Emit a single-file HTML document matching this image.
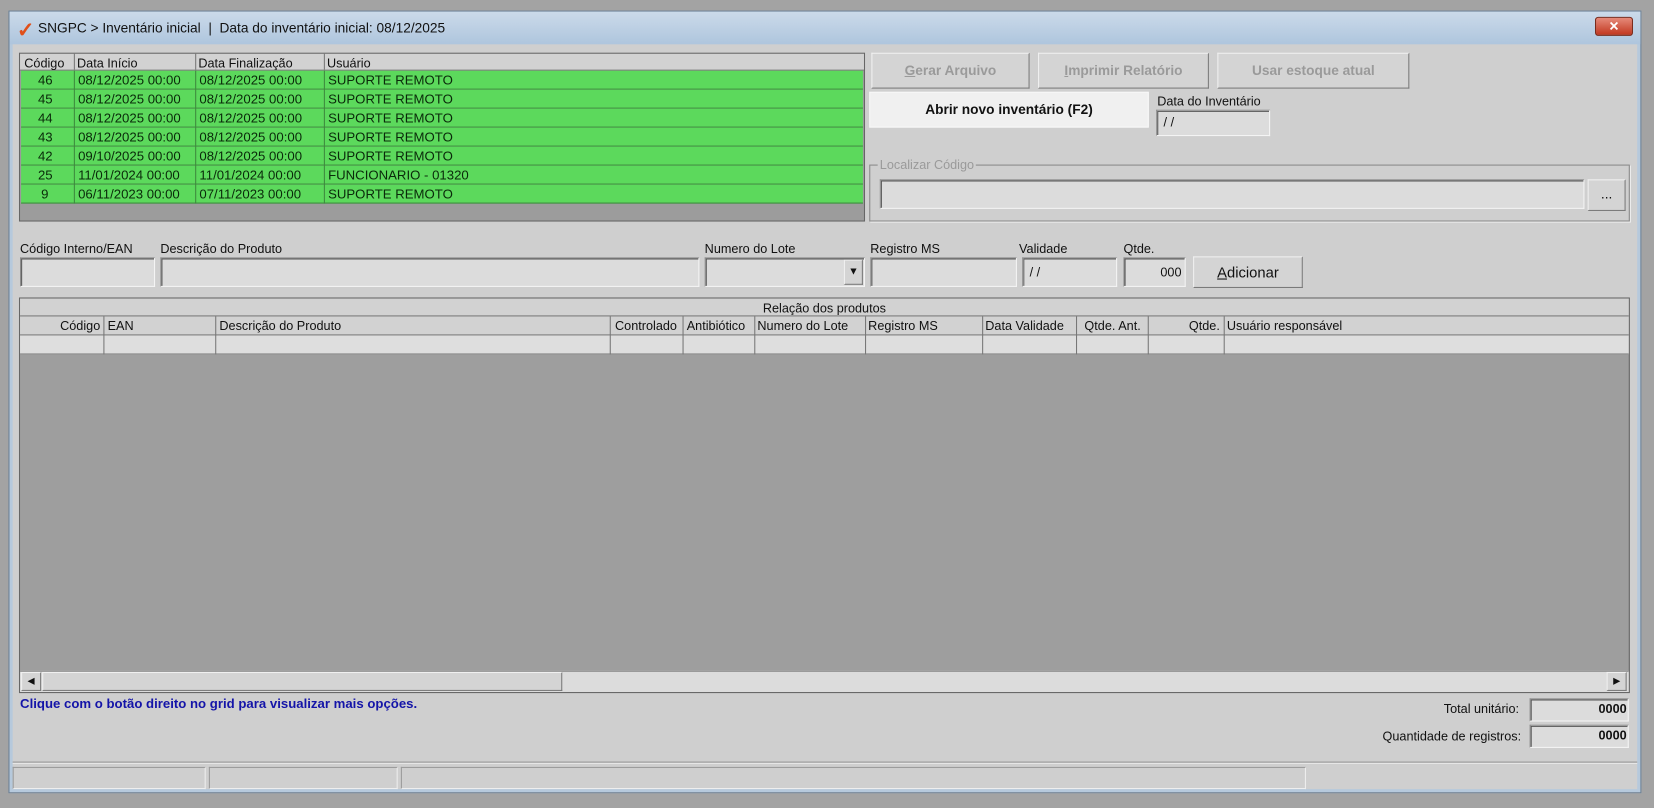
<!DOCTYPE html>
<html><head><meta charset="utf-8">
<style>
*{box-sizing:border-box;margin:0;padding:0}
html,body{width:1654px;height:808px;overflow:hidden;background:#a3a3a3}
#s{position:absolute;left:0;top:0;width:1568px;height:766px;transform:scale(1.0549);transform-origin:0 0;font-family:"Liberation Sans Narrow","Liberation Sans",sans-serif;font-size:12px;color:#111}
.a{position:absolute}
.win{left:8px;top:10px;width:1548px;height:742px;background:#cfcfcf;border:1px solid #6a7f94;box-shadow:inset 0 0 0 3px #b6c9dc}
.title{left:9px;top:11px;width:1546px;height:31px;background:linear-gradient(#cbdaea,#aec5dd)}
.inp{position:absolute;background:#dcdcdc;border:1px solid #8a8a8a;border-right-color:#f4f4f4;border-bottom-color:#f4f4f4;box-shadow:inset 1px 1px 0 #555}
.btn{position:absolute;background:#d4d4d4;border:1px solid #f0f0f0;border-right-color:#7a7a7a;border-bottom-color:#7a7a7a;text-align:center;font-weight:bold;font-size:13px}
.dis{color:#9a9a9a}
.row{position:absolute;left:20px;width:798px;height:18px;background:#5cd95c;border-bottom:1px solid #3d8a3d;color:#0a2a0a;font-size:12.5px}
.row span{position:absolute;top:2px}
.hd{position:absolute;font-size:12px;top:2px}
.col{position:absolute;top:0;bottom:0;border-left:1px solid #777}
</style></head><body><div id="s">
<div class="a win"></div>
<div class="a title"></div>
<div class="a" style="left:16px;top:16px;color:#e0501a;font-size:20px;font-weight:bold">✓</div>
<div class="a" style="left:36px;top:19px;font-size:13px">SNGPC &gt; Inventário inicial &nbsp;| &nbsp;Data do inventário inicial: 08/12/2025</div>
<div class="a" style="left:1512px;top:16px;width:36px;height:18px;background:linear-gradient(#e58a7a,#c2371f);border:1px solid #7a2a1a;border-radius:3px;color:#fff;text-align:center;font-weight:bold;line-height:16px">✕</div>

<div class="a" style="left:18px;top:50px;width:802px;height:160px;background:#9c9c9c;border:1px solid #666"></div>
<div class="a" style="left:19px;top:51px;width:800px;height:16px;background:#d2d2d2;border-bottom:1px solid #777">
<span class="hd" style="left:4px">Código</span><span class="hd" style="left:54px">Data Início</span><span class="hd" style="left:169px">Data Finalização</span><span class="hd" style="left:291px">Usuário</span>
<div class="col" style="left:51px"></div><div class="col" style="left:166px"></div><div class="col" style="left:288px"></div></div>
<div class="row" style="top:67px"><span style="left:16px">46</span><span style="left:54px">08/12/2025 00:00</span><span style="left:169px">08/12/2025 00:00</span><span style="left:291px">SUPORTE REMOTO</span></div>
<div class="row" style="top:85px"><span style="left:16px">45</span><span style="left:54px">08/12/2025 00:00</span><span style="left:169px">08/12/2025 00:00</span><span style="left:291px">SUPORTE REMOTO</span></div>
<div class="row" style="top:103px"><span style="left:16px">44</span><span style="left:54px">08/12/2025 00:00</span><span style="left:169px">08/12/2025 00:00</span><span style="left:291px">SUPORTE REMOTO</span></div>
<div class="row" style="top:121px"><span style="left:16px">43</span><span style="left:54px">08/12/2025 00:00</span><span style="left:169px">08/12/2025 00:00</span><span style="left:291px">SUPORTE REMOTO</span></div>
<div class="row" style="top:139px"><span style="left:16px">42</span><span style="left:54px">09/10/2025 00:00</span><span style="left:169px">08/12/2025 00:00</span><span style="left:291px">SUPORTE REMOTO</span></div>
<div class="row" style="top:157px"><span style="left:16px">25</span><span style="left:54px">11/01/2024 00:00</span><span style="left:169px">11/01/2024 00:00</span><span style="left:291px">FUNCIONARIO - 01320</span></div>
<div class="row" style="top:175px"><span style="left:19px">9</span><span style="left:54px">06/11/2023 00:00</span><span style="left:169px">07/11/2023 00:00</span><span style="left:291px">SUPORTE REMOTO</span></div>
<div class="a" style="left:70px;top:67px;height:126px;border-left:1px solid #3d8a3d"></div>
<div class="a" style="left:185px;top:67px;height:126px;border-left:1px solid #3d8a3d"></div>
<div class="a" style="left:307px;top:67px;height:126px;border-left:1px solid #3d8a3d"></div>

<div class="btn dis" style="left:826px;top:50px;width:150px;height:34px;line-height:32px"><u>G</u>erar Arquivo</div>
<div class="btn dis" style="left:984px;top:50px;width:162px;height:34px;line-height:32px"><u>I</u>mprimir Relatório</div>
<div class="btn dis" style="left:1154px;top:50px;width:182px;height:34px;line-height:32px">Usar estoque atual</div>
<div class="btn" style="left:824px;top:87px;width:265px;height:34px;line-height:32px;background:#f0f0f0;border-color:#f8f8f8">Abrir novo inventário (F2)</div>
<div class="a" style="left:1097px;top:89px">Data do Inventário</div>
<div class="inp" style="left:1096px;top:104px;width:108px;height:25px;padding:4px 6px">/ /</div>

<div class="a" style="left:824px;top:156px;width:721px;height:54px;border:1px solid #8a8a8a;box-shadow:1px 1px 0 #f0f0f0"></div>
<div class="a dis" style="left:832px;top:149px;background:#cfcfcf;padding:0 2px;color:#9a9a9a">Localizar Código</div>
<div class="inp" style="left:834px;top:170px;width:668px;height:28px"></div>
<div class="btn" style="left:1505px;top:170px;width:36px;height:30px;line-height:26px;font-weight:normal">...</div>

<div class="a" style="left:19px;top:229px">Código Interno/EAN</div>
<div class="a" style="left:152px;top:229px">Descrição do Produto</div>
<div class="a" style="left:668px;top:229px">Numero do Lote</div>
<div class="a" style="left:825px;top:229px">Registro MS</div>
<div class="a" style="left:966px;top:229px">Validade</div>
<div class="a" style="left:1065px;top:229px">Qtde.</div>
<div class="inp" style="left:19px;top:244px;width:128px;height:28px"></div>
<div class="inp" style="left:152px;top:244px;width:511px;height:28px"></div>
<div class="inp" style="left:668px;top:244px;width:152px;height:28px"></div>
<div class="btn" style="left:800px;top:246px;width:18px;height:24px;font-size:10px;line-height:22px">▼</div>
<div class="inp" style="left:825px;top:244px;width:139px;height:28px"></div>
<div class="inp" style="left:969px;top:244px;width:90px;height:28px;padding:6px 6px">/ /</div>
<div class="inp" style="left:1065px;top:244px;width:59px;height:28px;padding:6px 3px;text-align:right">000</div>
<div class="btn" style="left:1131px;top:243px;width:104px;height:30px;line-height:28px;font-weight:normal;font-size:14px"><u>A</u>dicionar</div>

<div class="a" style="left:18px;top:282px;width:1527px;height:375px;background:#9e9e9e;border:1px solid #666"></div>
<div class="a" style="left:19px;top:283px;width:1525px;height:17px;background:#d2d2d2;border-bottom:1px solid #777;text-align:center;padding-top:2px">Relação dos produtos</div>
<div class="a" style="left:19px;top:300px;width:1525px;height:18px;background:#d2d2d2;border-bottom:1px solid #777">
<span class="hd" style="left:38px">Código</span><span class="hd" style="left:83px">EAN</span><span class="hd" style="left:189px">Descrição do Produto</span><span class="hd" style="left:564px">Controlado</span><span class="hd" style="left:632px">Antibiótico</span><span class="hd" style="left:699px">Numero do Lote</span><span class="hd" style="left:804px">Registro MS</span><span class="hd" style="left:915px">Data Validade</span><span class="hd" style="left:1009px">Qtde. Ant.</span><span class="hd" style="left:1108px">Qtde.</span><span class="hd" style="left:1144px">Usuário responsável</span>
</div>
<div class="a" style="left:19px;top:318px;width:1525px;height:18px;background:#dedede;border-bottom:1px solid #888"></div>
<div class="a" style="left:19px;top:300px;width:1525px;height:36px">
<div class="col" style="left:79px"></div><div class="col" style="left:185px"></div><div class="col" style="left:559px"></div><div class="col" style="left:628px"></div><div class="col" style="left:696px"></div><div class="col" style="left:801px"></div><div class="col" style="left:912px"></div><div class="col" style="left:1001px"></div><div class="col" style="left:1069px"></div><div class="col" style="left:1141px"></div></div>
<div class="a" style="left:19px;top:636px;width:1525px;height:20px;background:#dcdcdc;border-top:1px solid #999"></div>
<div class="btn" style="left:20px;top:637px;width:19px;height:18px;font-size:8px;line-height:16px">◀</div>
<div class="btn" style="left:40px;top:637px;width:493px;height:18px"></div>
<div class="btn" style="left:1523px;top:637px;width:19px;height:18px;font-size:8px;line-height:16px">▶</div>

<div class="a" style="left:19px;top:660px;color:#1414a8;font-weight:bold;font-size:12.5px">Clique com o botão direito no grid para visualizar mais opções.</div>
<div class="a" style="left:1300px;top:665px;width:140px;text-align:right">Total unitário:</div>
<div class="inp" style="left:1450px;top:662px;width:94px;height:22px;text-align:right;font-weight:bold;padding:2px 1px">0000</div>
<div class="a" style="left:1280px;top:691px;width:162px;text-align:right">Quantidade de registros:</div>
<div class="inp" style="left:1450px;top:687px;width:94px;height:22px;text-align:right;font-weight:bold;padding:2px 1px">0000</div>

<div class="a" style="left:12px;top:722px;width:1540px;border-top:1px solid #8a8a8a;border-bottom:1px solid #eee"></div>
<div class="a" style="left:12px;top:727px;width:183px;height:21px;border:1px solid #9a9a9a;border-right-color:#eee;border-bottom-color:#eee"></div>
<div class="a" style="left:198px;top:727px;width:179px;height:21px;border:1px solid #9a9a9a;border-right-color:#eee;border-bottom-color:#eee"></div>
<div class="a" style="left:380px;top:727px;width:858px;height:21px;border:1px solid #9a9a9a;border-right-color:#eee;border-bottom-color:#eee"></div>
</div></body></html>
